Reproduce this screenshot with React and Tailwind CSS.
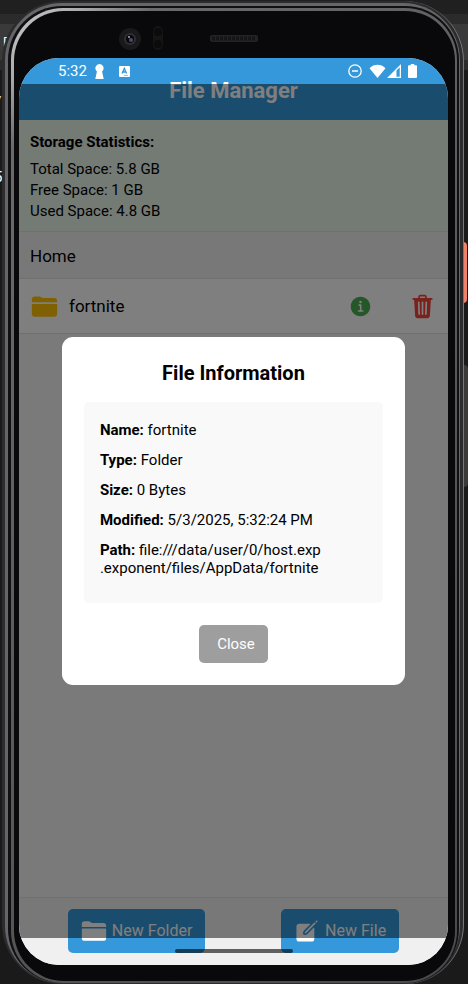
import { IoFolder, IoInformationCircle, IoTrash, IoCreate } from "react-icons/io5";

const stats = ["Total Space: 5.8 GB", "Free Space: 1 GB", "Used Space: 4.8 GB"];

const details = [
  ["Name:", "fortnite"],
  ["Type:", "Folder"],
  ["Size:", "0 Bytes"],
  ["Modified:", "5/3/2025, 5:32:24 PM"],
];

function StatusBar() {
  return (
    <div className="absolute inset-x-0 top-0 flex h-[26px] items-center justify-between pr-[31px] pl-[39px] text-white">
      <div className="flex items-center">
        <span className="text-[15px] leading-[18px]">5:32</span>
        <svg className="ml-2 h-[15px] w-[9px]" viewBox="0 0 9 15" fill="currentColor">
          <path d="M4.5 0a4.2 4.2 0 0 1 2.6 7.4L8.7 15H.3l1.6-7.6A4.2 4.2 0 0 1 4.5 0z" />
        </svg>
        <svg className="ml-[15px] h-[11px] w-[11px]" viewBox="0 0 11 11">
          <rect width="11" height="11" rx="1" fill="#fff" />
          <path d="M3 7.6 5.3 2.4 7.6 7.6M3.8 6h3" stroke="#3498db" strokeWidth="1.3" fill="none" />
          <path d="M5 9.4h4" stroke="#3498db" strokeWidth=".6" />
        </svg>
      </div>
      <div className="flex items-center">
        <svg className="h-[14px] w-[14px]" viewBox="0 0 14 14" fill="none" stroke="currentColor" strokeWidth="1.3">
          <circle cx="7" cy="7" r="6.2" />
          <path d="M4 7h6" strokeWidth="1.6" />
        </svg>
        <svg className="ml-[7px] h-[14px] w-[17px]" viewBox="0 0 17 14" fill="currentColor">
          <path d="M.5 4.3C5-.3 12-.3 16.5 4.300L8.500 14z" />
        </svg>
        <svg className="ml-px h-[14px] w-[14px]" viewBox="0 0 14 14" fill="currentColor">
          <path d="M14 0v14H0zM12.700 3.200 9.500 6.400v6.300h3.200z" fillRule="evenodd" />
        </svg>
        <svg className="ml-[7px] h-[14px] w-[9px]" viewBox="0 0 9 14" fill="currentColor">
          <path d="M2.800 0h3.400v1.300H8q1 0 1 1V13q0 1-1 1H1q-1 0-1-1V2.300q0-1 1-1h1.800z" />
        </svg>
      </div>
    </div>
  );
}

function InfoDialog() {
  return (
    <div className="absolute inset-x-0 top-[26px] bottom-[27px] flex items-center justify-center bg-black/50">
      <div
        role="dialog"
        aria-labelledby="info-title"
        className="flex w-4/5 flex-col items-center rounded-[11px] bg-white p-[22px]"
      >
        <h2 id="info-title" className="mb-[15px] text-xl leading-7 font-bold">
          File Information
        </h2>
        <div className="w-full rounded-[5px] bg-[#f9f9f9] px-4 pt-[19px] pb-[26px] text-[15px] leading-[18px]">
          <div className="flex flex-col gap-3">
            {details.map(([label, value]) => (
              <p key={label}>
                <b>{label}</b> {value}
              </p>
            ))}
            <p>
              <b>Path:</b> file:///data/user/0/host.exp
              <br />
              .exponent/files/AppData/fortnite
            </p>
          </div>
        </div>
        <button className="mt-[22px] h-[38px] rounded-[5px] bg-[#9e9e9e] pr-[13px] pl-[18px] text-[15px] text-white">
          Close
        </button>
      </div>
    </div>
  );
}

function Screen() {
  return (
    <main className="relative flex flex-1 flex-col overflow-hidden rounded-[40px] bg-[#f5f5f5] text-black">
      <header className="flex h-[62px] items-end justify-center bg-[#3498db] pb-[13px] text-white">
        <h1 className="text-[22px] leading-8 font-bold">File Manager</h1>
      </header>
      <section className="border-b border-[#e0e0e0] bg-[#e8f5e9] px-[11px] pt-3 pb-[9px] text-[15px]">
        <h2 className="mb-[7px] leading-5 font-bold">Storage Statistics:</h2>
        {stats.map((s) => (
          <p key={s} className="leading-[21px]">
            {s}
          </p>
        ))}
      </section>
      <nav className="border-b border-[#e0e0e0] bg-[#f0f0f0] px-[11px] pt-3 pb-[10px] text-[17px] leading-6">
        <a href="#home">Home</a>
      </nav>
      <div className="flex h-[55px] items-center border-b border-[#e0e0e0] bg-white pr-3 pl-3 text-[17px]">
        <IoFolder className="size-[27px] text-[#ffc107]" />
        <span className="ml-[11px] flex-1 pt-0.5">fortnite</span>
        <button aria-label="File information">
          <IoInformationCircle className="size-[25px] text-[#4caf50]" />
        </button>
        <button aria-label="Delete" className="ml-[36px]">
          <IoTrash className="size-[27px] text-[#f44336]" />
        </button>
      </div>
      <div className="flex-1" />
      <footer className="flex justify-around border-t border-[#e0e0e0] bg-[#f0f0f0] px-[11px] pt-[11px] pb-3 text-base text-white">
        <button className="flex h-11 items-center gap-[5px] rounded-[5px] bg-[#3498db] px-[13px]">
          <IoFolder className="size-[26px]" />
          New Folder
        </button>
        <button className="flex h-11 items-center gap-[5px] rounded-[5px] bg-[#3498db] px-[13px]">
          <IoCreate className="size-[26px]" />
          New File
        </button>
      </footer>
      <div className="absolute bottom-3 left-1/2 h-1 w-[118px] -translate-x-1/2 rounded-full bg-black/60" />
      <InfoDialog />
      <StatusBar />
    </main>
  );
}

export default function App() {
  return (
    <div className="relative flex min-h-screen flex-col overflow-hidden bg-[#1a1a1a] bg-[linear-gradient(#202020_14px,#2b2b2b_14px,#2b2b2b_24px,#3a3a3a_24px,#3a3a3a_60px,#2b2b2b_60px,#2b2b2b_70px,#1a1a1a_70px)] pt-px pr-1 pl-0.5 font-[Roboto,sans-serif]">
      <span className="absolute top-[34px] left-[3px] text-[13px] leading-4 text-white">F</span>
      <span className="absolute top-[93px] -left-1 text-[13px] leading-4 text-white">/</span>
      <span className="absolute top-[169px] -left-1.5 text-[15px] leading-4 text-white">5</span>
      <div className="absolute top-[242px] right-px h-[61px] w-2 rounded-sm bg-[#f0826a]" />
      <div className="absolute top-[365px] right-0 h-[122px] w-2 rounded-sm bg-[#3b3a38]" />
      <div className="relative flex flex-1 flex-col rounded-[60px] border-r border-[#77777a] bg-[#2c2c2e] pt-0.5 pr-[3px] pb-px pl-[3px]">
        <div className="flex flex-1 flex-col rounded-[57px] bg-[#66666a] pt-[3px] pr-px pl-[3px]">
          <div className="flex flex-1 flex-col rounded-[54px] bg-[#101012] pt-0.5 pr-0.5 pl-[3px]">
            <div className="flex flex-1 flex-col rounded-[52px] bg-[linear-gradient(135deg,#ccc,#aaa_50px,#6a6a6a_100px,#5a5a5a_50%,#4a4a4c)] pt-[3px] pr-0.5 pb-0.5 pl-[3px]">
              <div className="flex flex-1 flex-col rounded-[50px] bg-[#09090b] pr-[7px] pb-4 pl-[5px]">
                <div className="relative h-[47px]">
                  <svg className="absolute top-[15px] left-[100px]" width="150" height="24" viewBox="0 0 150 24">
                    <circle cx="11" cy="13" r="11" fill="#19191b" />
                    <circle cx="11" cy="13" r="6" fill="#303034" />
                    <circle cx="11" cy="13" r="4" fill="#09090d" />
                    <circle cx="12" cy="14" r="2" fill="#4a4b72" />
                    <circle cx="10" cy="11" r="1" fill="#aaa" />
                    <rect x="34" y="0" width="10" height="24" rx="5" fill="#151516" />
                    <circle cx="39" cy="6" r="4" fill="#0b0b0c" />
                    <circle cx="39" cy="18" r="4" fill="#0b0b0c" />
                    <rect x="91" y="9" width="48" height="7" rx="2" fill="#232324" />
                    <path d="M93 12.500h44" stroke="#151515" strokeWidth="4" strokeDasharray="3 1" />
                  </svg>
                </div>
                <Screen />
              </div>
            </div>
          </div>
        </div>
      </div>
    </div>
  );
}
